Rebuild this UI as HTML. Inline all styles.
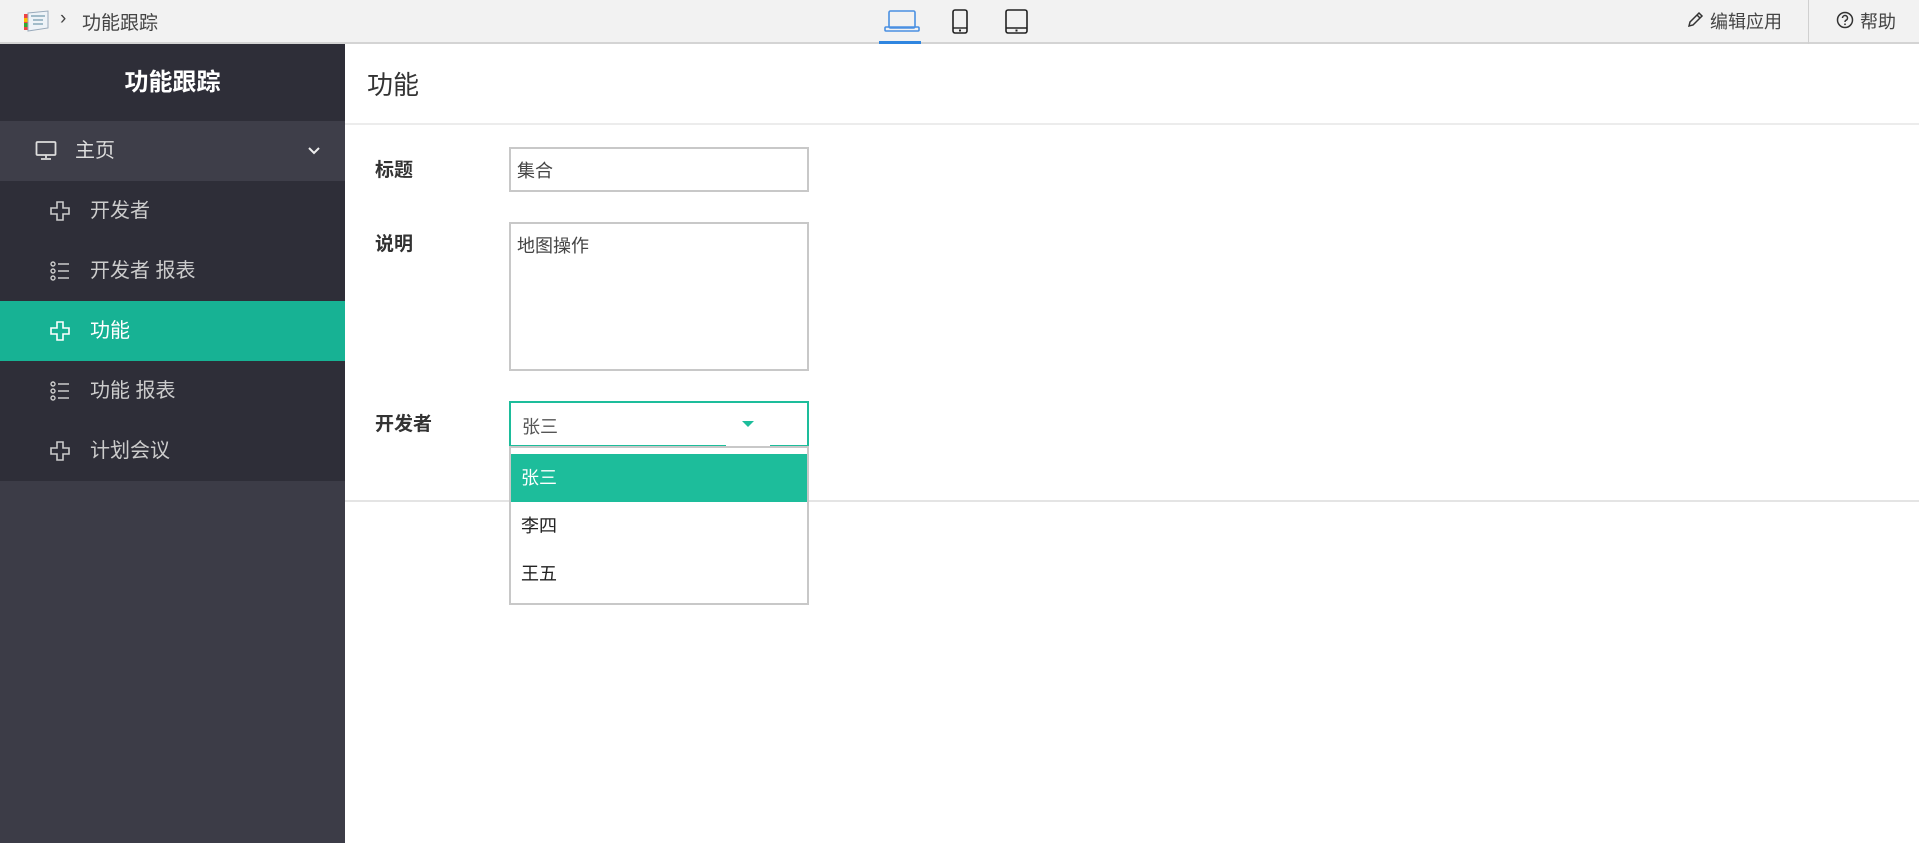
<!DOCTYPE html>
<html><head><meta charset="utf-8"><style>
*{box-sizing:border-box;margin:0;padding:0}
body{width:1919px;height:843px;overflow:hidden;background:#fff;font-family:"Liberation Sans","Noto Sans CJK SC",sans-serif;color:#333;position:relative}
.abs{position:absolute}
#top{left:0;top:0;width:1919px;height:44px;background:#f2f2f2;border-bottom:2px solid #d4d4d4}
#side{left:0;top:44px;width:345px;height:799px;background:#3c3c47}
.mi{position:absolute;left:0;width:345px;height:60px;color:#ccc;font-size:20px;line-height:60px}
.mi span{position:absolute;left:90px}
.mi svg{position:absolute;left:50px;top:20px}
.lbl{position:absolute;left:375px;font-size:19px;font-weight:bold;color:#333}
.box{position:absolute;left:509px;width:300px;border:2px solid #c8c8c8;font-size:18px;color:#444}
</style></head><body>
<div id="top" class="abs">
 <svg class="abs" style="left:22px;top:10px" width="28" height="22" viewBox="0 0 28 22"><rect x="2" y="4" width="5" height="16" fill="#e44"/><rect x="2" y="8" width="5" height="4" fill="#fb0"/><rect x="2" y="13" width="5" height="4" fill="#3a3"/><path d="M6 3 L26 1 L26 18 L6 21Z" fill="#eef3f8" stroke="#9ab" stroke-width="1"/><path d="M9 6h14M11 10h10M11 14h10" stroke="#8ab" stroke-width="1.5"/></svg>
 <div class="abs" style="left:60px;top:8px;font-size:19px;color:#444">›</div>
 <div class="abs" style="left:82px;top:8px;font-size:19px;color:#444">功能跟踪</div>
 <svg class="abs" style="left:884px;top:9px" width="36" height="24" viewBox="0 0 36 24"><rect x="5" y="2" width="26" height="17" rx="1.5" fill="none" stroke="#4a90e2" stroke-width="1.6"/><rect x="1" y="18" width="34" height="4" rx="1" fill="none" stroke="#4a90e2" stroke-width="1.6"/></svg>
 <div class="abs" style="left:879px;top:41px;width:42px;height:3px;background:#2f86e0"></div>
 <svg class="abs" style="left:951px;top:9px" width="18" height="26" viewBox="0 0 18 26"><rect x="2" y="1" width="14" height="23" rx="2" fill="none" stroke="#222" stroke-width="1.6"/><path d="M2 19h14" stroke="#222" stroke-width="1.4"/><rect x="8" y="20.5" width="2" height="2" fill="#222"/></svg>
 <svg class="abs" style="left:1004px;top:9px" width="26" height="26" viewBox="0 0 26 26"><rect x="2" y="1" width="21" height="23" rx="2" fill="none" stroke="#222" stroke-width="1.6"/><path d="M2 19h21" stroke="#222" stroke-width="1.4"/><rect x="11.5" y="20.5" width="2" height="2" fill="#222"/></svg>
 <svg class="abs" style="left:1686px;top:11px" width="18" height="18" viewBox="0 0 18 18"><path d="M3 15l1-4 9-9 3 3-9 9z M11 4l3 3" fill="none" stroke="#333" stroke-width="1.5"/></svg>
 <div class="abs" style="left:1710px;top:8px;font-size:18px;color:#444">编辑应用</div>
 <div class="abs" style="left:1808px;top:0;width:1px;height:44px;background:#d0d0d0"></div>
 <svg class="abs" style="left:1836px;top:11px" width="18" height="18" viewBox="0 0 18 18"><circle cx="9" cy="9" r="7.5" fill="none" stroke="#333" stroke-width="1.5"/><path d="M6.5 7a2.5 2.5 0 1 1 3.2 2.4c-.6.3-.7.7-.7 1.6" fill="none" stroke="#333" stroke-width="1.5"/><circle cx="9" cy="13.3" r=".9" fill="#333"/></svg>
 <div class="abs" style="left:1860px;top:8px;font-size:18px;color:#444">帮助</div>
</div>
<div id="side" class="abs">
 <div class="abs" style="left:0;top:0;width:345px;height:77px;background:#2e2e38;color:#fff;font-weight:bold;font-size:24px;text-align:center;line-height:77px">功能跟踪</div>
 <div class="mi" style="top:77px;background:#3e3e49;color:#ddd"><svg style="left:35px;top:20px" width="22" height="20" viewBox="0 0 22 20"><rect x="1.5" y="1" width="19" height="13" rx="1" fill="none" stroke="#ddd" stroke-width="1.8"/><path d="M11 14v3M6 18h10" stroke="#ddd" stroke-width="1.8"/></svg><span style="left:75px">主页</span><svg style="left:307px;top:25px" width="14" height="10" viewBox="0 0 14 10"><path d="M2 2l5 5 5-5" fill="none" stroke="#eee" stroke-width="2"/></svg></div>
 <div style="position:absolute;left:0;top:137px;width:345px;height:300px;background:#2e2e38"></div>
 <div class="mi" style="top:137px"><svg width="20" height="20" viewBox="0 0 20 20"><path d="M7 1h6v6h6v6h-6v6h-6v-6h-6v-6h6z" fill="none" stroke="#ccc" stroke-width="1.6"/></svg><span>开发者</span></div>
 <div class="mi" style="top:197px"><svg width="20" height="20" viewBox="0 0 20 20"><circle cx="3" cy="3" r="2" fill="none" stroke="#ccc" stroke-width="1.4"/><circle cx="3" cy="10" r="2" fill="none" stroke="#ccc" stroke-width="1.4"/><circle cx="3" cy="17" r="2" fill="none" stroke="#ccc" stroke-width="1.4"/><path d="M8 3h11M8 10h11M8 17h11" stroke="#ccc" stroke-width="1.6"/></svg><span>开发者 报表</span></div>
 <div class="mi" style="top:257px;background:#17b294;color:#fff"><svg width="20" height="20" viewBox="0 0 20 20"><path d="M7 1h6v6h6v6h-6v6h-6v-6h-6v-6h6z" fill="none" stroke="#fff" stroke-width="1.6"/></svg><span>功能</span></div>
 <div class="mi" style="top:317px"><svg width="20" height="20" viewBox="0 0 20 20"><circle cx="3" cy="3" r="2" fill="none" stroke="#ccc" stroke-width="1.4"/><circle cx="3" cy="10" r="2" fill="none" stroke="#ccc" stroke-width="1.4"/><circle cx="3" cy="17" r="2" fill="none" stroke="#ccc" stroke-width="1.4"/><path d="M8 3h11M8 10h11M8 17h11" stroke="#ccc" stroke-width="1.6"/></svg><span>功能 报表</span></div>
 <div class="mi" style="top:377px"><svg width="20" height="20" viewBox="0 0 20 20"><path d="M7 1h6v6h6v6h-6v6h-6v-6h-6v-6h6z" fill="none" stroke="#ccc" stroke-width="1.6"/></svg><span>计划会议</span></div>
</div>
<div class="abs" style="left:367px;top:65px;font-size:26px;color:#333">功能</div>
<div class="abs" style="left:345px;top:123px;width:1574px;height:2px;background:#ececec"></div>
<div class="lbl" style="top:155px">标题</div>
<div class="box" style="top:147px;height:45px;padding:8px 6px">集合</div>
<div class="lbl" style="top:229px">说明</div>
<div class="box" style="top:222px;height:149px;padding:8px 6px">地图操作</div>
<div class="lbl" style="top:409px">开发者</div>
<div class="abs" style="left:345px;top:500px;width:1574px;height:2px;background:#e4e4e4"></div>
<div class="box" style="top:401px;height:46px;border-color:#1dbd9b;padding:10px 11px;color:#555">张三<svg style="position:absolute;left:230px;top:17px" width="14" height="8" viewBox="0 0 14 8"><path d="M1 1h12l-6 6z" fill="#1dbd9b"/></svg><div style="position:absolute;left:215px;bottom:-2px;width:44px;height:2px;background:#fff"></div></div>
<div class="box" style="top:446px;height:159px;background:#fff">
 <div style="position:absolute;left:0;top:6px;width:296px;height:48px;background:#1dbd9b;color:#fff;padding:0 10px;line-height:48px">张三</div>
 <div style="position:absolute;left:10px;top:64px;color:#222">李四</div>
 <div style="position:absolute;left:10px;top:112px;color:#222">王五</div>
</div>
</body></html>
